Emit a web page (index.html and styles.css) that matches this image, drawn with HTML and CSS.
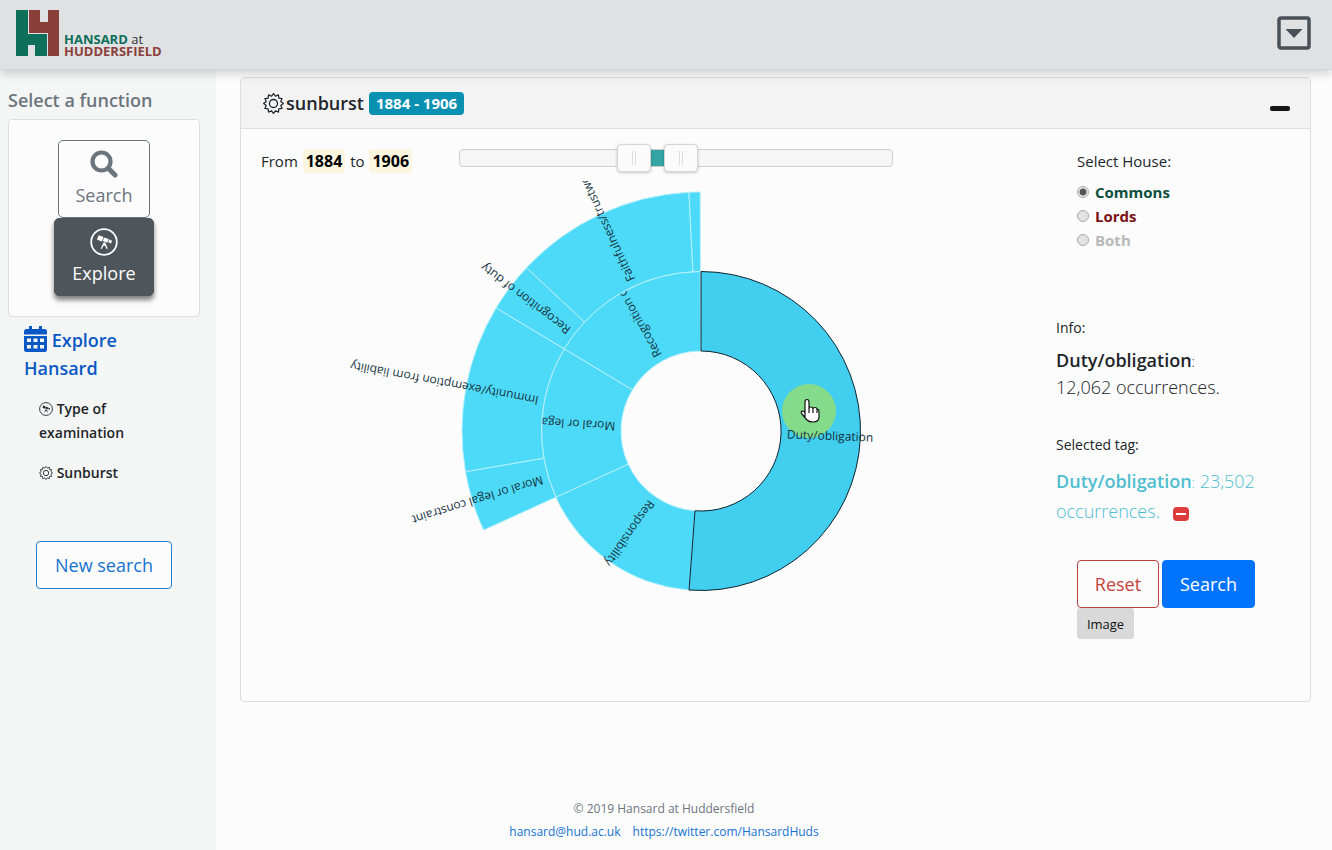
FILE: index.html
```html
<!DOCTYPE html>
<html lang="en">
<head>
<meta charset="utf-8">
<meta name="viewport" content="width=device-width, initial-scale=1">
<title>Hansard at Huddersfield</title>
<link rel="stylesheet" href="styles.css">
</head>
<body>
<svg class="defs" width="0" height="0" aria-hidden="true">
  <symbol id="gear" viewBox="0 0 24 24">
    <path d="M12 .7L14.230 3.690 17.650 2.200 18.080 5.920 21.800 6.350 20.310 9.770 23.300 12 20.310 14.230 21.800 17.650 18.080 18.080 17.650 21.800 14.230 20.310 12 23.300 9.770 20.310 6.350 21.800 5.920 18.080 2.200 17.650 3.690 14.230 .7 12 3.690 9.770 2.200 6.350 5.920 5.920 6.350 2.200 9.770 3.690z" fill="none" stroke="currentColor" stroke-width="1.400" stroke-linejoin="round"/>
    <circle cx="12" cy="12" r="4.600" fill="none" stroke="currentColor" stroke-width="1.500"/>
  </symbol>
  <symbol id="scope" viewBox="0 0 28 28">
    <circle cx="14" cy="14" r="12.800" fill="none" stroke="currentColor" stroke-width="1.800"/>
    <path d="M8.600 7.200l5 1.900-1.700 4.400-5-1.900z M14.200 9.400l4.500 1.700-1.400 3.600-4.500-1.700z M19.200 11.600l2.900 1.100-1 2.700-2.900-1.100z" fill="currentColor"/>
    <path d="M14.300 14.500L11.200 20.800 M14.500 14.500L17.200 20.800 M13 17h3" fill="none" stroke="currentColor" stroke-width="1.300"/>
  </symbol>
</svg>

<header class="topbar">
  <a class="brand" href="#">
    <svg class="brand-mark" viewBox="0 0 44 47" aria-hidden="true">
      <path fill="#0d6e5a" d="M0 0H12V24H31V46H19V35H12V46H0z"/>
      <path fill="#8b3f3a" d="M13 0H24V12H32V0H43V46H32V23H13z"/>
    </svg>
    <span class="brand-name"><span class="green">HANSARD</span> <span class="at">at</span><br><span class="red">HUDDERSFIELD</span></span>
  </a>
  <button class="menu-button" aria-label="Open menu">
    <svg viewBox="0 0 34 34" aria-hidden="true"><rect x="2" y="2" width="30" height="30" rx="2" fill="none" stroke="#495057" stroke-width="3.500"/><path d="M8.500 13h17L17 22z" fill="#495057"/></svg>
  </button>
</header>

<div class="layout">
  <aside class="sidebar">
    <h2 class="sidebar-title">Select a function</h2>
    <div class="function-box">
      <button class="function">
        <svg viewBox="0 0 28 28" aria-hidden="true"><circle cx="11.500" cy="11.500" r="9" fill="none" stroke="currentColor" stroke-width="4.200"/><path d="M18.500 18.500l6.500 6.500" stroke="currentColor" stroke-width="5" stroke-linecap="round"/></svg>
        Search
      </button>
      <button class="function active">
        <svg aria-hidden="true"><use href="#scope"/></svg>
        Explore
      </button>
    </div>
    <nav class="side-nav">
      <a class="nav-main" href="#"><svg viewBox="0 0 23 26" aria-hidden="true"><path fill="currentColor" fill-rule="evenodd" d="M5 0h3v3h7V0h3v3h2.500Q23 3 23 5.500V8.500H0V5.500Q0 3 2.500 3H5zM0 10H23V23.500Q23 26 20.500 26H2.500Q0 26 0 23.500zM3 12.500v3.500h4v-3.500zM9.500 12.500v3.500h4v-3.500zM16 12.500v3.500h4v-3.500zM3 19v3.500h4V19zM9.500 19v3.500h4V19zM16 19v3.500h4V19z"/></svg> Explore Hansard</a>
      <a class="nav-sub" href="#"><svg aria-hidden="true"><use href="#scope"/></svg> Type of examination</a>
      <a class="nav-sub" href="#"><svg aria-hidden="true"><use href="#gear"/></svg> Sunburst</a>
    </nav>
    <button class="button outline-blue">New search</button>
  </aside>

  <main class="content">
    <section class="card">
      <div class="card-head">
        <h1 class="card-title"><svg aria-hidden="true"><use href="#gear"/></svg>sunburst</h1>
        <span class="badge">1884 - 1906</span>
        <button class="collapse" aria-label="Collapse"></button>
      </div>
      <div class="card-body">
        <div class="chart-col">
          <div class="range-row">
            <p class="range-text">From <mark>1884</mark> to <mark>1906</mark></p>
            <div class="slider">
              <input type="range" min="1810" max="1997" value="1884" aria-label="From year">
              <input type="range" min="1810" max="1997" value="1906" aria-label="To year">
            </div>
          </div>
          <svg class="sunburst" viewBox="-353 -250 706 500" role="img" aria-label="Sunburst of tags" id="chart"></svg>
        </div>
        <div class="info-col">
          <fieldset class="house">
            <legend>Select House:</legend>
            <label class="commons"><input type="radio" name="house" checked>Commons</label>
            <label class="lords"><input type="radio" name="house">Lords</label>
            <label class="both"><input type="radio" name="house">Both</label>
          </fieldset>
          <div class="info">
            <h3>Info:</h3>
            <p class="info-text"><strong>Duty/obligation</strong><small>:</small><br>12,062 occurrences.</p>
          </div>
          <div class="selected">
            <h3>Selected tag:</h3>
            <p class="tag-text"><strong>Duty/obligation</strong><small>:</small> 23,502 occurrences. <button class="remove" aria-label="Remove tag"></button></p>
          </div>
          <div class="actions">
            <button class="button outline-red">Reset</button>
            <button class="button solid-blue">Search</button>
          </div>
          <button class="image-button">Image</button>
        </div>
      </div>
    </section>
  </main>

  <footer class="footer">
    <p>© 2019 Hansard at Huddersfield</p>
    <p><a href="#">hansard@hud.ac.uk</a><a href="#">https://twitter.com/HansardHuds</a></p>
  </footer>
</div>
<script src="chart.js"></script>
</body>
</html>
```
FILE: styles.css
```css
* { box-sizing: border-box; }

body {
  margin: 0;
  min-height: 100vh;
  display: flex;
  flex-direction: column;
  background: #fcfcfc;
  color: #212529;
  font-family: "Open Sans", "Noto Sans", sans-serif;
  font-size: 15px;
  line-height: 24px;
}

h1, h2, h3, p { margin: 0; font-weight: 400; }
button, input { font: inherit; }
button { cursor: pointer; }
a { color: #1573d1; text-decoration: none; }
.defs { position: absolute; }

.topbar {
  height: 70px;
  padding: 0 21px 3px 16px;
  display: flex;
  align-items: center;
  justify-content: space-between;
  background: #e0e1e3;
  border-bottom: 1px solid #d4d5d7;
  box-shadow: 0 4px 9px rgba(0, 0, 0, 0.16);
  z-index: 1;
}
.brand { display: flex; align-items: flex-end; gap: 4px; }
.brand-mark { width: 44px; height: 47px; }
.brand-name { font-size: 13px; font-weight: 700; line-height: 12px; }
.brand-name .green { color: #0d6e5a; }
.brand-name .red { color: #8b3f3a; }
.brand-name .at { color: #333; font-weight: 400; }
.menu-button { width: 34px; height: 34px; padding: 0; border: 0; background: none; }
.menu-button svg { display: block; }

.layout {
  flex: 1;
  display: grid;
  grid-template-columns: 216px 1fr;
  grid-template-rows: 1fr auto;
}

.sidebar {
  grid-column: 1;
  grid-row: 1 / 3;
  padding: 16px 16px 0 8px;
  background: #f4f6f5;
}
.sidebar-title { margin-bottom: 5px; color: #6c757d; font-size: 18px; line-height: 28px; font-weight: 600; }
.function-box {
  padding: 20px 0;
  display: flex;
  flex-direction: column;
  align-items: center;
  background: #fcfcfc;
  border: 1px solid #dee0e0;
  border-radius: 4px;
}
.function {
  width: 92px;
  height: 78px;
  padding: 9px 0 0;
  display: flex;
  flex-direction: column;
  align-items: center;
  gap: 2px;
  color: #6c757d;
  font-size: 18px;
  line-height: 30px;
  background: #fcfcfc;
  border: 1px solid #6c757d;
  border-radius: 5px;
}
.function svg { width: 28px; height: 28px; }
.function.active {
  width: 100px;
  color: #fff;
  background: #4e555b;
  border-color: #4e555b;
  box-shadow: 0 4px 5px rgba(0, 0, 0, 0.5);
}
.side-nav { padding: 9px 24px 0 16px; display: flex; flex-direction: column; }
.nav-main { color: #0a58c4; font-size: 18px; font-weight: 600; line-height: 28px; }
.nav-main svg { width: 23px; height: 26px; vertical-align: -5px; }
.nav-sub { margin: 15px 0 0 15px; color: #212529; font-weight: 600; font-size: 14px; }
.nav-sub + .nav-sub { margin-top: 16px; }
.nav-sub svg { width: 14px; height: 14px; vertical-align: -2px; }

.button {
  height: 48px;
  padding: 0 16px;
  font-size: 18px;
  border: 1px solid;
  border-radius: 4px;
  background: #fcfcfc;
}
.outline-blue { display: block; width: 136px; margin: 56px 0 0 28px; color: #1573d1; border-color: #2380cc; }
.outline-red { width: 82px; color: #c6423f; border-color: #b9403f; }
.solid-blue { width: 93px; color: #fff; background: #0073ff; border-color: #0073ff; }

.content { padding: 7px 21px 0 24px; }
.card { border: 1px solid #dcdddd; border-radius: 4px; }
.card-head {
  height: 51px;
  padding: 0 20px 0 22px;
  display: flex;
  align-items: center;
  gap: 5px;
  background: #f3f3f3;
  border-bottom: 1px solid #dcdddd;
}
.card-title { display: flex; align-items: center; gap: 2px; font-size: 18px; font-weight: 600; }
.card-title svg { width: 21px; height: 21px; }
.badge {
  padding: 0 7px;
  color: #fff;
  font-weight: 700;
  line-height: 23px;
  background: #0a91b1;
  border-radius: 4px;
}
.collapse { width: 20px; height: 5px; margin: 10px 0 0 auto; padding: 0; border: 0; border-radius: 2px; background: #151515; }

.card-body { padding: 20px; display: grid; grid-template-columns: 1fr 236px; }
.range-row { height: 32px; display: flex; align-items: flex-start; gap: 46px; }
.range-text { width: 152px; white-space: nowrap; }
mark { padding: 1px 3px; margin: 0 1px; color: #000; font-size: 16px; font-weight: 700; background: #fcf6e0; border-radius: 3px; }

.slider {
  width: 434px;
  height: 18px;
  display: grid;
  align-items: center;
  border: 1px solid #cfcfcf;
  border-radius: 4px;
  background: linear-gradient(90deg, #f6f6f6 40%, #35a5a3 40% 52%, #f6f6f6 52%);
}
.slider input {
  grid-area: 1 / 1;
  appearance: none;
  width: 100%;
  height: 28px;
  margin: -6px 0;
  background: none;
  pointer-events: none;
}
.slider input::-webkit-slider-thumb {
  appearance: none;
  width: 34px;
  height: 28px;
  border: 1px solid #d5d5d5;
  border-radius: 4px;
  background: linear-gradient(90deg, #ddd 1px, transparent 1px 3px, #ddd 3px) center / 4px 14px no-repeat, #fbfbfb;
  box-shadow: 0 1px 3px rgba(0, 0, 0, 0.2);
  pointer-events: auto;
}

.chart-col { display: flex; flex-direction: column; }
.sunburst { display: block; align-self: flex-end; width: 100%; max-width: 706px; overflow: hidden; }
.sunburst path.arc { fill: #4ddaf9; stroke: #b4f0fc; stroke-width: 1; }
.sunburst path.hovered { fill: #41ceef; stroke: #0c2430; }
.sunburst text { fill: #16323c; font-size: 12px; }
.sunburst .pulse { fill: #90de79; fill-opacity: 0.85; }

.info-col { padding-left: 2px; display: flex; flex-direction: column; align-items: flex-start; }
.house { margin: 0 0 0 21px; padding: 0; border: 0; display: flex; flex-direction: column; }
.house legend { padding: 0; margin-bottom: 7px; }
.house label { display: flex; align-items: center; gap: 6px; font-weight: 700; }
.house input {
  appearance: none;
  width: 12px;
  height: 12px;
  margin: 0;
  border: 1px solid #aaa;
  border-radius: 50%;
  background: #e2e2e2;
}
.house input:checked { background: radial-gradient(circle, #555 3px, #e8e8e8 4px); }
.commons { color: #0b4f3d; }
.lords { color: #7b1113; }
.both { color: #b7b9ba; }

h3 { font-size: 14px; }
.info { margin-top: 64px; }
.info-text { margin-top: 7px; font-size: 18px; line-height: 27px; font-weight: 300; }
.selected { margin-top: 32px; }
.tag-text { margin-top: 9px; color: #4fbdd0; font-size: 18px; line-height: 30px; font-weight: 300; }
.info-col strong { font-weight: 600; }
.info-col small { font-size: 14px; line-height: 1; }
.remove {
  width: 16px;
  height: 14px;
  margin-left: 8px;
  padding: 0;
  border: 0;
  border-radius: 4px;
  vertical-align: -3px;
  background: linear-gradient(#fff, #fff) center / 10px 2px no-repeat, #dd3c3c;
}
.actions { margin: 34px 0 0 21px; display: flex; gap: 3px; }
.image-button {
  height: 31px;
  width: 57px;
  margin-left: 21px;
  padding: 0;
  color: #111;
  font-size: 13px;
  border: 0;
  border-radius: 3px;
  background: #d9d9d9;
}

.footer {
  grid-column: 1 / 3;
  grid-row: 2;
  padding: 0 4px 7px 0;
  color: #6c757d;
  font-size: 12px;
  line-height: 23px;
  text-align: center;
}
.footer p { display: flex; justify-content: center; gap: 12px; }
```
FILE: chart.js
```js
const NS = "http://www.w3.org/2000/svg";
const chart = document.getElementById("chart");
const RING = [80, 159.5, 239];

// Angles are degrees clockwise from twelve o'clock; inner ring is drawn first.
const slices = [
  { ring: 0, from: 184.3, to: 245.5, label: "Responsibility" },
  { ring: 0, from: 245.5, to: 301.0, label: "Moral or legal" },
  { ring: 0, from: 301.0, to: 359.7, label: "Recognition of" },
  { ring: 1, from: 245.5, to: 260.2, label: "Moral or legal constraint" },
  { ring: 1, from: 260.2, to: 301.0, label: "Immunity/exemption from liability" },
  { ring: 1, from: 301.0, to: 313.1, label: "Recognition of duty" },
  { ring: 1, from: 313.1, to: 357.1, label: "Faithfulness/trustworthiness" },
  { ring: 1, from: 357.1, to: 359.8, label: "" },
  { ring: 0, from: 0, to: 184.3, label: "Duty/obligation", hovered: true }
];

function add(parent, name, attrs) {
  const el = document.createElementNS(NS, name);
  for (const key in attrs) el.setAttribute(key, attrs[key]);
  parent.appendChild(el);
  return el;
}

function point(radius, degrees) {
  const a = degrees * Math.PI / 180;
  return (radius * Math.sin(a)).toFixed(2) + " " + (-radius * Math.cos(a)).toFixed(2);
}

for (const s of slices) {
  const r0 = RING[s.ring], r1 = RING[s.ring + 1];
  const large = s.to - s.from > 180 ? 1 : 0;
  add(chart, "path", {
    class: s.hovered ? "arc hovered" : "arc",
    d: `M${point(r0, s.from)}L${point(r1, s.from)}A${r1} ${r1} 0 ${large} 1 ${point(r1, s.to)}L${point(r0, s.to)}A${r0} ${r0} 0 ${large} 0 ${point(r0, s.from)}Z`
  });
  if (s.hovered) add(chart, "circle", { class: "pulse", cx: 108, cy: -20, r: 27 });
  const mid = (s.from + s.to) / 2 - 90;
  add(chart, "text", { transform: `rotate(${mid})`, x: r0 + 6, dy: "0.35em" }).textContent = s.label;
}

add(chart, "path", {
  d: "M104 -13V-29Q104 -31.500 106 -31.500T108 -29V-22Q108 -24 110 -24T112 -22Q112 -23.500 114 -23.500T116 -21.500Q118 -22.500 118 -19V-14Q118 -9 112 -9Q108 -9 106 -11L101 -17Q99 -20 102 -20Q103 -20 104 -18M108 -22V-18M112 -21.500V-18M116 -21V-18",
  fill: "#fff", stroke: "#111", "stroke-width": 1.2, "stroke-linejoin": "round"
});
```
